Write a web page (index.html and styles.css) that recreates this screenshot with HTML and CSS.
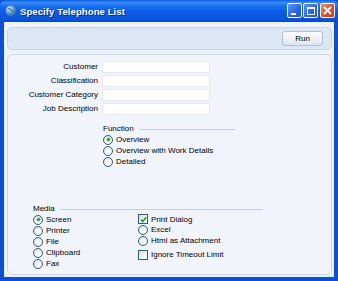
FILE: index.html
```html
<!DOCTYPE html>
<html>
<head>
<meta charset="utf-8">
<link rel="stylesheet" href="styles.css">
</head>
<body>
<div class="window">
  <div class="titlebar">
    <svg class="app-icon" width="12" height="12" viewBox="0 0 12 12">
      <defs>
        <radialGradient id="g" cx="0.35" cy="0.3" r="0.8">
          <stop offset="0" stop-color="#d8ecff"/>
          <stop offset="0.5" stop-color="#5a9ad8"/>
          <stop offset="1" stop-color="#1b4f9a"/>
        </radialGradient>
      </defs>
      <circle cx="6" cy="6" r="5.5" fill="url(#g)"/>
      <path d="M3 4 Q5 3 6 5 Q7 7 9 6" stroke="#3a7a3a" stroke-width="1.2" fill="none"/>
    </svg>
    <span class="title">Specify Telephone List</span>
    <div class="caption-buttons">
      <div class="cbtn cmin"><span class="min-bar"></span></div>
      <div class="cbtn cmax"><span class="max-box"></span></div>
      <div class="cbtn cclose">
        <svg width="9" height="9" viewBox="0 0 9 9"><path d="M1 1 L8 8 M8 1 L1 8" stroke="#fff" stroke-width="1.8"/></svg>
      </div>
    </div>
  </div>
  <div class="client">
    <div class="toolbar">
      <button class="run-btn">Run</button>
    </div>
    <div class="panel">
      <div class="fields">
        <label class="flabel">Customer</label><div class="input"></div>
        <label class="flabel">Classification</label><div class="input"></div>
        <label class="flabel">Customer Category</label><div class="input"></div>
        <label class="flabel">Job Description</label><div class="input"></div>
      </div>
      <div class="group function-group">
        <div class="group-head"><span>Function</span><span class="rule"></span></div>
        <div class="opt"><span class="radio checked"></span>Overview</div>
        <div class="opt"><span class="radio"></span>Overview with Work Details</div>
        <div class="opt"><span class="radio"></span>Detailed</div>
      </div>
      <div class="group media-group">
        <div class="group-head"><span>Media</span><span class="rule"></span></div>
        <div class="media-cols">
          <div class="col col-left">
            <div class="opt"><span class="radio checked"></span>Screen</div>
            <div class="opt"><span class="radio"></span>Printer</div>
            <div class="opt"><span class="radio"></span>File</div>
            <div class="opt"><span class="radio"></span>Clipboard</div>
            <div class="opt"><span class="radio"></span>Fax</div>
          </div>
          <div class="col col-right">
            <div class="opt"><span class="check checked"><svg width="7" height="7" viewBox="0 0 7 7"><path d="M0.8 3.5 L2.8 5.5 L6.2 1.2" stroke="#21a121" stroke-width="1.6" fill="none"/></svg></span>Print Dialog</div>
            <div class="opt"><span class="radio"></span>Excel</div>
            <div class="opt"><span class="radio"></span>Html as Attachment</div>
            <div class="opt gap"><span class="check"></span>Ignore Timeout Limit</div>
          </div>
        </div>
      </div>
    </div>
  </div>
</div>
</body>
</html>
```
FILE: styles.css
```css
* { box-sizing: border-box; }
html, body { margin: 0; padding: 0; }
body {
  width: 338px;
  height: 281px;
  overflow: hidden;
  font-family: "Liberation Sans", Arial, sans-serif;
  font-size: 8px;
  color: #000;
}
.window {
  width: 338px;
  height: 281px;
  display: flex;
  flex-direction: column;
  background: #0b4fd6;
}
.titlebar {
  height: 22px;
  flex: none;
  display: flex;
  align-items: center;
  padding: 0 3px 0 5px;
  background: linear-gradient(#0a5fe8 0%, #3b8cf7 12%, #1a6ef0 28%, #0b5ce6 55%, #0a55dd 85%, #0848c6 100%);
  border-radius: 6px 6px 0 0;
  color: #fff;
}
.app-icon { flex: none; margin-right: 3px; }
.title {
  font-weight: bold;
  font-size: 9.5px;
  text-shadow: 1px 1px 0 #0a2a80;
  flex: 1;
  letter-spacing: 0.1px;
}
.caption-buttons { display: flex; gap: 1px; margin-top: -1px; }
.cbtn {
  width: 15px;
  height: 15px;
  border: 1px solid #fff;
  border-radius: 2px;
  background: linear-gradient(135deg, #5c95f5, #2a64e0 60%, #1e55cc);
  display: flex;
  align-items: center;
  justify-content: center;
  position: relative;
}
.cclose { background: linear-gradient(135deg, #f0906c, #e0502a 55%, #c83a18); margin-left: 1px; }
.min-bar { width: 5px; height: 2px; background: #fff; margin-top: 6px; margin-right: 3px; }
.max-box { width: 8px; height: 8px; border: 1px solid #fff; border-top-width: 2px; }
.client {
  flex: 1;
  margin: 0 4px 4px 4px;
  background: #eef2fa;
  padding: 5px 2px 2px 3px;
  display: flex;
  flex-direction: column;
}
.toolbar {
  height: 23px;
  flex: none;
  background: #dde6f4;
  border: 1px solid #c8d4e8;
  border-radius: 5px;
  display: flex;
  align-items: center;
  justify-content: flex-end;
  padding-right: 8px;
}
.run-btn {
  width: 41px;
  height: 15px;
  font-family: inherit;
  font-size: 8px;
  padding: 0;
  border: 1px solid #b3c0d4;
  border-radius: 3px;
  background: linear-gradient(#fbfcfe, #e9edf4 70%, #dde3ec);
  color: #000;
}
.panel {
  flex: 1;
  margin-top: 4px;
  background: #f1f4fb;
  border: 1px solid #cbd6e8;
  border-radius: 6px;
  padding: 6px 0 0 0;
  display: flex;
  flex-direction: column;
}
.fields {
  display: grid;
  grid-template-columns: 90px 108px;
  column-gap: 4px;
  row-gap: 2px;
  align-items: center;
}
.flabel { text-align: right; line-height: 12px; }
.input {
  height: 12px;
  background: #fff;
  border: 1px solid #e4e9f2;
}
.group-head {
  display: flex;
  align-items: center;
  height: 11px;
}
.rule {
  flex: 1;
  height: 1px;
  background: #c6cfdd;
  margin-left: 5px;
  margin-top: 2px;
}
.opt {
  display: flex;
  align-items: center;
  height: 11px;
  white-space: nowrap;
}
.function-group {
  margin-left: 95px;
  width: 132px;
  margin-top: 8px;
}
.function-group .opt:first-child + .opt { margin-top: 0; }
.media-group {
  margin-left: 25px;
  width: 230px;
  margin-top: 36px;
}
.media-cols { display: flex; }
.col-left { width: 105px; }
.col-right .opt:first-child { height: 10px; }
.opt.gap { margin-top: 3px; }
.radio {
  width: 10px;
  height: 10px;
  border-radius: 50%;
  border: 1px solid #2b5a8c;
  background: radial-gradient(circle at 60% 65%, #fff 0%, #f4f4f0 40%, #dcdcd4 100%);
  margin-right: 3px;
  flex: none;
  position: relative;
}
.radio.checked::after {
  content: "";
  position: absolute;
  left: 2.5px;
  top: 2.5px;
  width: 3px;
  height: 3px;
  border-radius: 50%;
  background: #2ba52b;
  box-shadow: 0 0 0 0.5px #7bd07b;
}
.check {
  width: 10px;
  height: 10px;
  border: 1px solid #2b5a8c;
  background: linear-gradient(135deg, #dcdcd4, #f4f4f0 60%, #fff);
  margin-right: 3px;
  flex: none;
  display: flex;
  align-items: center;
  justify-content: center;
}
```
